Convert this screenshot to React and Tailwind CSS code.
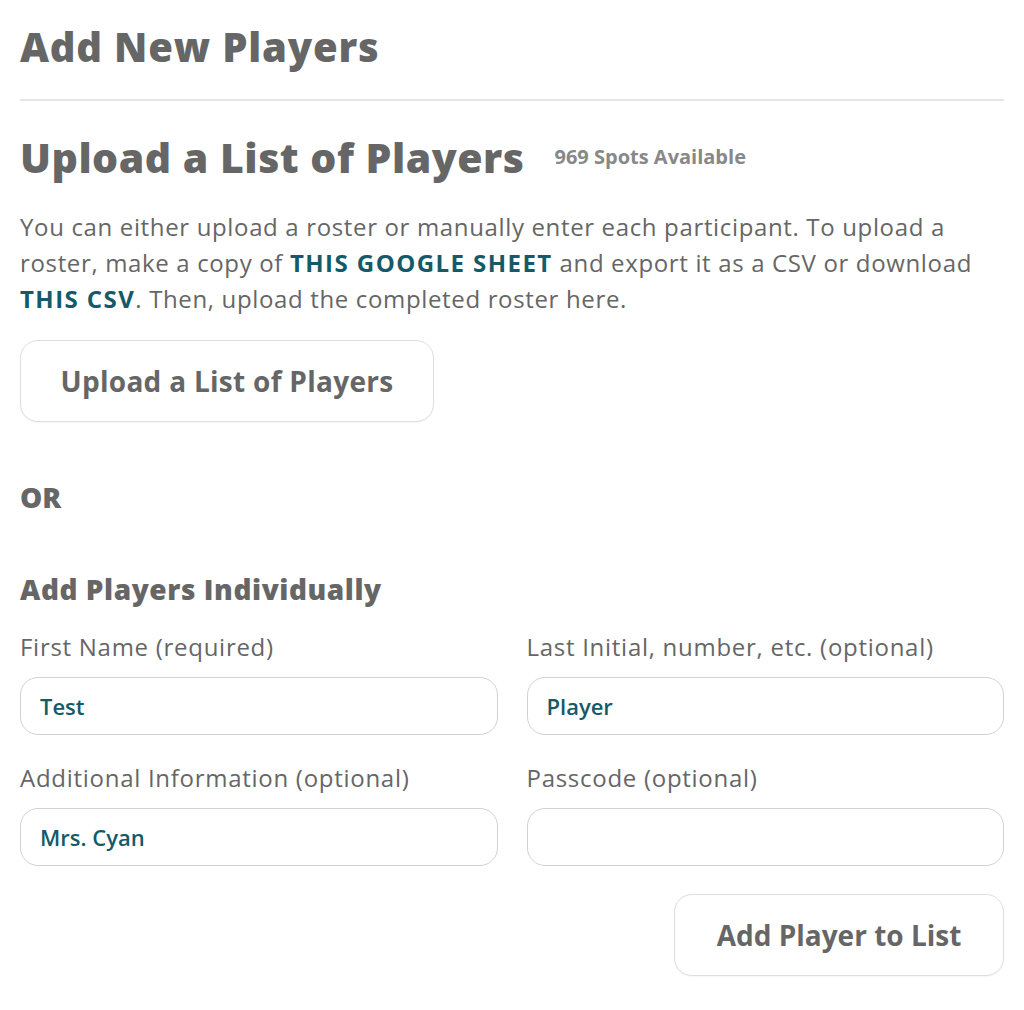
import React from "react";

export default function App() {
  const font = { fontFamily: '"Open Sans", "Noto Sans", sans-serif' };
  return (
    <div className="min-h-[1010px] bg-white text-[#666666]" style={font}>
      <div className="px-5 pt-[20px]">
        <h1 className="text-[40px] leading-[54px] font-extrabold tracking-[0.02em] text-[#666666]">Add New Players</h1>
        <div className="mt-[25px] h-[2px] w-[984px] bg-[#e6e6e6]" />
        <div className="mt-[29px] flex items-center gap-[30px]">
          <h2 className="text-[41px] leading-[54px] font-extrabold tracking-[0.012em]">Upload a List of Players</h2>
          <span className="text-[20px] font-bold text-[#888888]">969 Spots Available</span>
        </div>
        <p className="mt-[25px] text-[24px] leading-[36px] tracking-[0.027em] whitespace-nowrap">
          You can either upload a roster or manually enter each participant. To upload a
          <br />
          roster, make a copy of <a className="font-bold tracking-[0.06em] text-[#145a68]">THIS GOOGLE SHEET</a> and export it as a CSV or download
          <br />
          <a className="font-bold tracking-[0.06em] text-[#145a68]">THIS CSV</a>. Then, upload the completed roster here.
        </p>
        <button className="mt-[23px] h-[82px] w-[414px] rounded-[18px] border border-[#dedede] bg-white text-[28px] font-bold tracking-[0.01em] text-[#666666] shadow-[0_1px_2px_rgba(0,0,0,0.04)]">
          Upload a List of Players
        </button>
        <div className="mt-[60px] text-[28px] leading-[30px] font-extrabold">OR</div>
        <h3 className="mt-[60px] text-[28px] leading-[34px] font-extrabold tracking-[0.02em]">Add Players Individually</h3>
        <div className="mt-[26px] grid grid-cols-2 gap-x-[29px]">
          {[
            ["First Name (required)", "Test"],
            ["Last Initial, number, etc. (optional)", "Player"],
            ["Additional Information (optional)", "Mrs. Cyan"],
            ["Passcode (optional)", ""],
          ].map(([label, value], i) => (
            <div key={i} className={i >= 2 ? "mt-[28px]" : ""}>
              <div className="text-[24px] leading-[30px] tracking-[0.03em] whitespace-nowrap">{label}</div>
              <div className="mt-[15px] flex h-[58px] items-center rounded-[18px] border-[1.5px] border-[#d2d2d2] px-[19px] text-[22px] font-semibold text-[#145a68]">
                {value}
              </div>
            </div>
          ))}
        </div>
        <div className="mt-[28px] flex justify-end">
          <button className="h-[82px] w-[330px] rounded-[18px] border border-[#dedede] bg-white text-[28px] font-bold text-[#666666] shadow-[0_1px_2px_rgba(0,0,0,0.04)]">
            Add Player to List
          </button>
        </div>
      </div>
    </div>
  );
}
